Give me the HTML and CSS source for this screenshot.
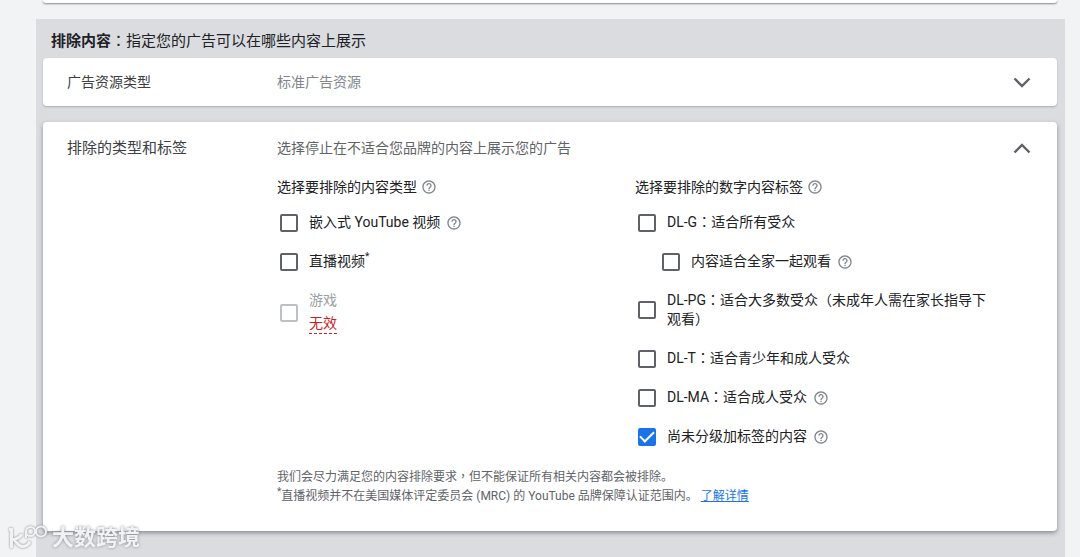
FILE: index.html
```
<!DOCTYPE html>
<html lang="zh-CN">
  <head>
    <meta charset="utf-8">
    <title>排除内容</title>
    <link rel="stylesheet" href="styles.css">
  </head>

  <body>
    <svg class="sprite">
      <symbol id="help" viewBox="0 0 24 24">
        <path d="M11 18h2v-2h-2v2zm1-16C6.48 2 2 6.48 2 12s4.48 10 10 10 10-4.48 10-10S17.52 2 12 2zm0 18c-4.41 0-8-3.59-8-8s3.59-8 8-8 8 3.59 8 8-3.59 8-8 8zm0-14c-2.21 0-4 1.79-4 4h2c0-1.1.9-2 2-2s2 .9 2 2c0 2-3 1.75-3 5h2c0-2.25 3-2.5 3-5 0-2.21-1.79-4-4-4z"/>
      </symbol>
    </svg>

    <div class="previousCard"></div>

    <main class="section">
      <h2 class="sectionTitle"><b>排除内容</b><span class="mid" lang="zh-TW">：</span>指定您的广告可以在哪些内容上展示</h2>

      <div class="card">
        <button class="cardHeader" aria-expanded="false">
          <span class="cardName small">广告资源类型</span>
          <span class="cardValue">标准广告资源</span>
          <svg class="chevron" viewBox="0 0 24 24"><path d="M4.5 8.5l7.5 7.5 7.5-7.5"/></svg>
        </button>
      </div>

      <div class="card open">
        <button class="cardHeader" aria-expanded="true">
          <span class="cardName">排除的类型和标签</span>
          <span class="cardValue">选择停止在不适合您品牌的内容上展示您的广告</span>
          <svg class="chevron" viewBox="0 0 24 24"><path d="M4.5 16.5l7.5-7.5 7.5 7.5"/></svg>
        </button>

        <div class="cardBody">
          <div class="columns">
            <div class="column">
              <h3 class="columnTitle">选择要排除的内容类型
                <button class="help near" aria-label="帮助"><svg><use href="#help"/></svg></button>
              </h3>
              <div class="option">
                <input type="checkbox" id="embedded">
                <label for="embedded">嵌入式 YouTube 视频</label>
                <button class="help" aria-label="帮助"><svg><use href="#help"/></svg></button>
              </div>
              <div class="option">
                <input type="checkbox" id="live">
                <label for="live">直播视频<sup>*</sup></label>
              </div>
              <div class="option disabled">
                <input type="checkbox" id="games" disabled>
                <div>
                  <label for="games">游戏</label>
                  <div class="invalid"><span>无效</span></div>
                </div>
              </div>
            </div>

            <div class="column">
              <h3 class="columnTitle">选择要排除的数字内容标签
                <button class="help near" aria-label="帮助"><svg><use href="#help"/></svg></button>
              </h3>
              <div class="option">
                <input type="checkbox" id="dlg">
                <label for="dlg">DL-G<span class="mid" lang="zh-TW">：</span>适合所有受众</label>
              </div>
              <div class="option nested">
                <input type="checkbox" id="family">
                <label for="family">内容适合全家一起观看</label>
                <button class="help" aria-label="帮助"><svg><use href="#help"/></svg></button>
              </div>
              <div class="option">
                <input type="checkbox" id="dlpg">
                <label for="dlpg">DL-PG<span class="mid" lang="zh-TW">：</span>适合大多数受众（未成年人需在家长指导下观看）</label>
              </div>
              <div class="option">
                <input type="checkbox" id="dlt">
                <label for="dlt">DL-T<span class="mid" lang="zh-TW">：</span>适合青少年和成人受众</label>
              </div>
              <div class="option">
                <input type="checkbox" id="dlma">
                <label for="dlma">DL-MA<span class="mid" lang="zh-TW">：</span>适合成人受众</label>
                <button class="help" aria-label="帮助"><svg><use href="#help"/></svg></button>
              </div>
              <div class="option">
                <input type="checkbox" id="unrated" checked>
                <label for="unrated">尚未分级加标签的内容</label>
                <button class="help" aria-label="帮助"><svg><use href="#help"/></svg></button>
              </div>
            </div>
          </div>

          <div class="notes">
            <p>我们会尽力满足您的内容排除要求<span class="mid" lang="zh-TW">，</span>但不能保证所有相关内容都会被排除。</p>
            <p><sup>*</sup>直播视频并不在美国媒体评定委员会 (MRC) 的 YouTube 品牌保障认证范围内。 <a href="#">了解详情</a></p>
          </div>
        </div>
      </div>
    </main>

    <div class="watermark">
      <svg viewBox="0 0 40 28">
        <path d="M1 5.500h2.500V24M13.500 10c-1 3-4 5-9 5.500 4 0 4 7 10 7 4 0 6-2 7.500-5"/>
        <path class="thin" d="M18 14V7"/>
        <circle class="thin" cx="22.500" cy="7.500" r="4.500"/>
        <circle class="thin" cx="33" cy="7.500" r="5"/>
      </svg>
      <span>大数跨境</span>
    </div>
  </body>
</html>
```

FILE: styles.css
```
* {
  box-sizing: border-box;
}

body {
  margin: 0;
  padding: 0 15px 0 36px;
  min-height: 100vh;
  display: flex;
  flex-direction: column;
  background-color: #f1f3f4;
  color: #202124;
  font-family: Roboto, "Noto Sans CJK SC", sans-serif;
  font-size: 14px;
  line-height: 19px;
}

h2, h3, p {
  margin: 0;
  font-weight: 400;
}

button {
  border: 0;
  padding: 0;
  background: none;
  color: inherit;
  font: inherit;
  text-align: left;
  cursor: pointer;
}

sup {
  font-size: 10px;
  line-height: 0;
}

.sprite {
  display: none;
}

/* centred full-width punctuation */
.mid {
  font-family: "Noto Sans CJK TC", sans-serif;
  line-height: 0;
}

.previousCard {
  height: 3px;
  margin: 0 8px 16px 7px;
  background-color: #fff;
  border-radius: 0 0 4px 4px;
  box-shadow: 0 1px 2px rgba(60, 64, 67, 0.6);
}

.section {
  flex: 1;
  padding: 0 8px 27px 7px;
  background-color: #dadce0;
}

.sectionTitle {
  padding: 12px 8px 7px;
  font-size: 15px;
  line-height: 20px;
}

.card {
  background-color: #fff;
  border-radius: 4px;
  box-shadow: 0 1px 2px rgba(60, 64, 67, 0.3);
}

.card.open {
  margin-top: 16px;
  box-shadow: 0 2px 4px rgba(60, 64, 67, 0.5);
}

.cardHeader {
  display: flex;
  align-items: center;
  width: 100%;
  height: 48px;
  padding: 0 23px 0 24px;
}

.open .cardHeader {
  height: 52px;
}

.cardName {
  width: 210px;
  color: #3c4043;
  font-size: 15px;
}

.cardName.small {
  font-size: 14px;
}

.cardValue {
  flex: 1;
  color: #80868b;
}

.open .cardValue {
  color: #5f6368;
}

.chevron {
  width: 24px;
  height: 24px;
  fill: none;
  stroke: #5f6368;
  stroke-width: 2.4;
}

.cardBody {
  padding: 0 64px 25px 234px;
}

.columns {
  display: grid;
  grid-template-columns: 1fr 1fr;
}

.columnTitle {
  display: flex;
  align-items: center;
  height: 26px;
  margin-bottom: 3px;
  font-size: 14px;
}

.option {
  display: flex;
  align-items: center;
  padding: 10px 0 10px 3px;
}

.option.nested {
  padding-left: 27px;
}

input[type="checkbox"] {
  appearance: none;
  display: grid;
  place-items: center;
  flex: none;
  width: 18px;
  height: 18px;
  margin: 0 11px 0 0;
  border: 2px solid #5f6368;
  border-radius: 2px;
}

input[type="checkbox"]:checked {
  border-color: #1a73e8;
  background-color: #1a73e8;
}

input[type="checkbox"]:checked::after {
  content: "";
  width: 12px;
  height: 6px;
  margin-bottom: 4px;
  border: solid #fff;
  border-width: 0 0 2px 2px;
  transform: rotate(-45deg);
}

input[type="checkbox"]:disabled {
  border-color: #bdc1c6;
}

.help {
  flex: none;
  width: 16px;
  height: 16px;
  margin-left: 6px;
}

.help.near {
  margin-left: 4px;
}

.help svg {
  display: block;
  width: 16px;
  height: 16px;
  fill: #80868b;
}

.disabled {
  color: #9aa0a6;
}

.disabled label {
  display: block;
}

.invalid {
  margin-top: 4px;
  color: #c5221f;
}

.invalid span {
  display: inline-block;
  border-bottom: 1px dashed #c5221f;
}

.notes {
  margin-top: 12px;
  color: #5f6368;
  font-size: 12px;
}

.notes a {
  color: #1a73e8;
}

.watermark {
  position: fixed;
  left: 8px;
  bottom: 4px;
  display: flex;
  align-items: center;
  gap: 4px;
  color: #f1f2f3;
  font-size: 22px;
  font-weight: 700;
  line-height: 30px;
  text-shadow: 0 0 3px #80868b;
}

.watermark svg {
  width: 40px;
  height: 28px;
  overflow: visible;
  fill: none;
  stroke: #f1f2f3;
  stroke-width: 3;
  filter: drop-shadow(0 0 1px #80868b);
}

.watermark .thin {
  stroke-width: 2;
}
```
